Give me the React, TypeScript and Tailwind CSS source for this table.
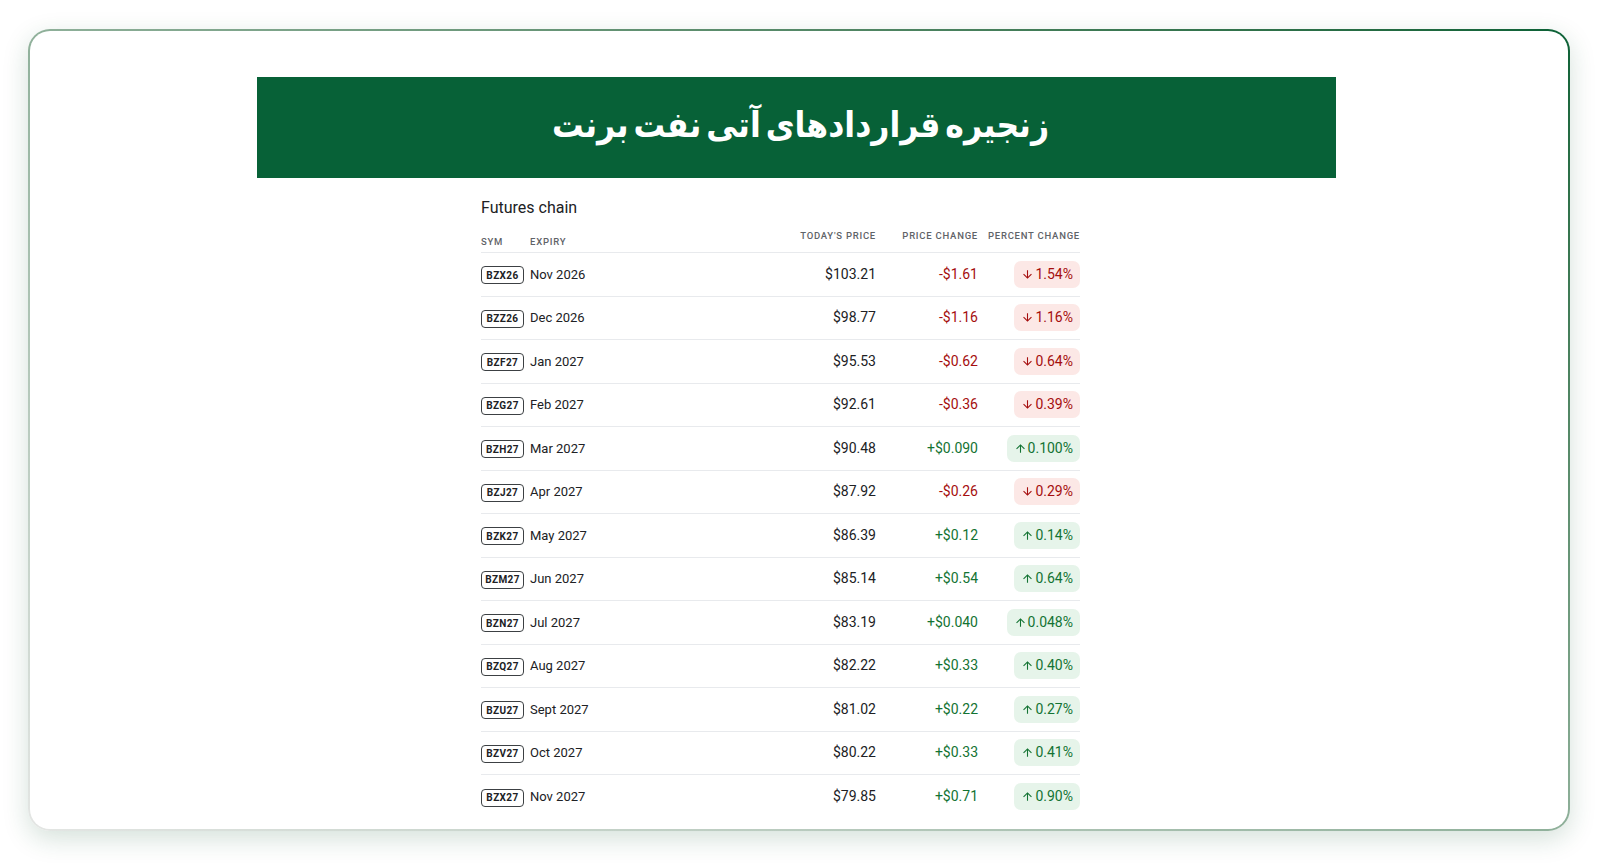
import React from "react";

type Row = {
  sym: string;
  expiry: string;
  price: string;
  change: string;
  pct: string;
  up: boolean;
};

const rows: Row[] = [
  { sym: "BZX26", expiry: "Nov 2026", price: "$103.21", change: "-$1.61", pct: "1.54%", up: false },
  { sym: "BZZ26", expiry: "Dec 2026", price: "$98.77", change: "-$1.16", pct: "1.16%", up: false },
  { sym: "BZF27", expiry: "Jan 2027", price: "$95.53", change: "-$0.62", pct: "0.64%", up: false },
  { sym: "BZG27", expiry: "Feb 2027", price: "$92.61", change: "-$0.36", pct: "0.39%", up: false },
  { sym: "BZH27", expiry: "Mar 2027", price: "$90.48", change: "+$0.090", pct: "0.100%", up: true },
  { sym: "BZJ27", expiry: "Apr 2027", price: "$87.92", change: "-$0.26", pct: "0.29%", up: false },
  { sym: "BZK27", expiry: "May 2027", price: "$86.39", change: "+$0.12", pct: "0.14%", up: true },
  { sym: "BZM27", expiry: "Jun 2027", price: "$85.14", change: "+$0.54", pct: "0.64%", up: true },
  { sym: "BZN27", expiry: "Jul 2027", price: "$83.19", change: "+$0.040", pct: "0.048%", up: true },
  { sym: "BZQ27", expiry: "Aug 2027", price: "$82.22", change: "+$0.33", pct: "0.40%", up: true },
  { sym: "BZU27", expiry: "Sept 2027", price: "$81.02", change: "+$0.22", pct: "0.27%", up: true },
  { sym: "BZV27", expiry: "Oct 2027", price: "$80.22", change: "+$0.33", pct: "0.41%", up: true },
  { sym: "BZX27", expiry: "Nov 2027", price: "$79.85", change: "+$0.71", pct: "0.90%", up: true },
];

const Arrow = ({ up }: { up: boolean }) => (
  <svg viewBox="0 0 24 24" className="w-[13px] h-[13px] shrink-0" fill="currentColor">
    {up ? (
      <path d="M4 12l1.41 1.41L11 7.83V20h2V7.83l5.58 5.59L20 12l-8-8-8 8z" />
    ) : (
      <path d="M20 12l-1.41-1.41L13 16.17V4h-2v12.17l-5.58-5.59L4 12l8 8 8-8z" />
    )}
  </svg>
);

const App = () => {
  return (
    <div className="w-[1600px] h-[863px] bg-white pt-[29px] pl-[28px]">
      {/* gradient border wrapper */}
      <div className="w-[1542px] h-[802px] rounded-[22px] p-[2px] bg-linear-to-tr from-[#e4e6e4] via-[#8fb09a] to-[#0a6136] shadow-[0_8px_26px_rgba(20,90,50,0.18)]">
        <div className="w-full h-full rounded-[20px] bg-white overflow-hidden">
          {/* banner */}
          <div className="mt-[46px] ml-[227px] w-[1079px] h-[101px] bg-[#076137] flex items-center justify-center">
            <h1
              dir="rtl"
              className="text-white text-[35px] font-bold leading-none pb-[4px] pl-[8px] [word-spacing:-6px] [font-family:'DejaVu_Sans_Condensed','DejaVu_Sans',sans-serif]"
            >
              زنجیره قراردادهای آتی نفت برنت
            </h1>
          </div>

          {/* futures table */}
          <div className="ml-[451px] w-[599px] [font-family:Roboto,'Open_Sans',sans-serif]">
            <div className="mt-[18px] h-[24px] flex items-center text-[16px] text-[#202124]">Futures chain</div>

            <div className="grid grid-cols-[49px_226px_120px_102px_102px] h-[33px] items-end border-b border-[#e8eaed] text-[9.5px] font-medium tracking-[0.08em] text-[#5f6368]">
              <div className="pb-[3px]">SYM</div>
              <div className="pb-[3px]">EXPIRY</div>
              <div className="pb-[9px] text-right">TODAY'S PRICE</div>
              <div className="pb-[9px] text-right">PRICE CHANGE</div>
              <div className="pb-[9px] text-right">PERCENT CHANGE</div>
            </div>

            {rows.map((r) => (
              <div
                key={r.sym}
                className="grid grid-cols-[49px_226px_120px_102px_102px] h-[43.5px] items-center border-b border-[#e8eaed] last:border-b-0 text-[14px] text-[#202124]"
              >
                <div>
                  <span className="inline-flex items-center justify-center w-[43px] h-[18px] border border-[#3c4043] rounded-[4px] text-[10px] font-bold tracking-[0.04em]">
                    {r.sym}
                  </span>
                </div>
                <div className="text-[13px]">{r.expiry}</div>
                <div className="text-right">{r.price}</div>
                <div className={`text-right ${r.up ? "text-[#137333]" : "text-[#a50e0e]"}`}>{r.change}</div>
                <div className="flex justify-end">
                  <span
                    className={`inline-flex items-center gap-[1px] h-[27px] px-[7px] rounded-[7px] ${
                      r.up ? "bg-[#e6f4ea] text-[#137333]" : "bg-[#fce8e6] text-[#a50e0e]"
                    }`}
                  >
                    <Arrow up={r.up} />
                    {r.pct}
                  </span>
                </div>
              </div>
            ))}
          </div>
        </div>
      </div>
    </div>
  );
};

export default App;
